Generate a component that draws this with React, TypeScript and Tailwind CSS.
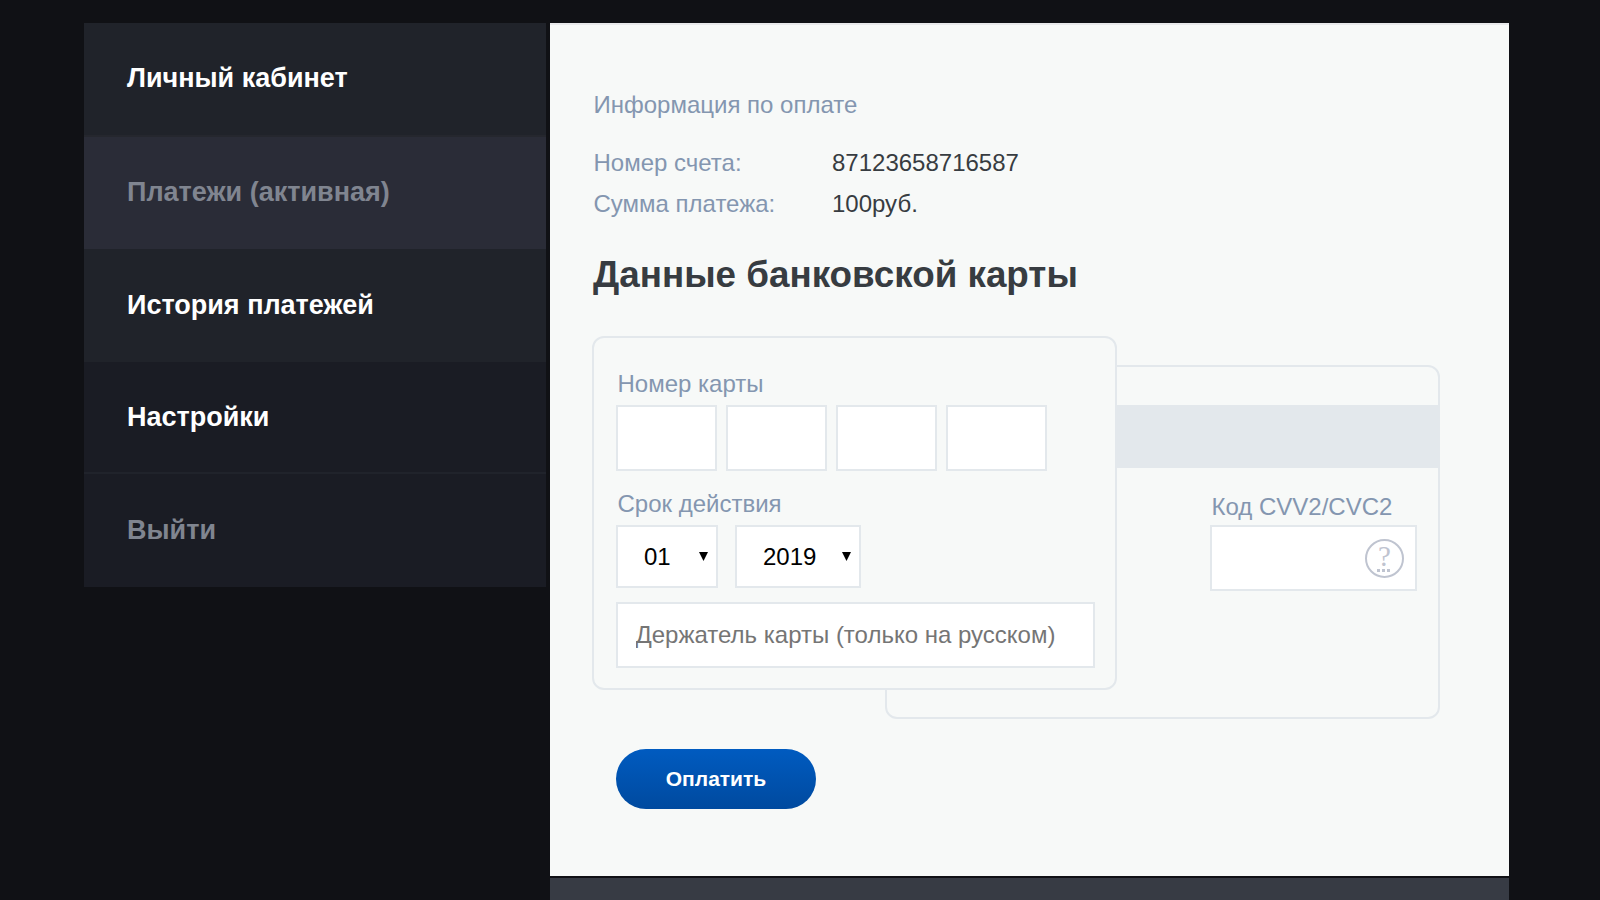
const menu = [
  { label: 'Личный кабинет', style: 'h-[114px] pt-[39px] bg-[#20232a] border-b-2 border-[#25272e] text-white' },
  { label: 'Платежи (активная)', style: 'h-[112px] pt-[39px] bg-[#2a2c37] text-[#808590]' },
  { label: 'История платежей', style: 'h-[113px] pt-[40px] bg-[#20232a] text-white' },
  { label: 'Настройки', style: 'h-[112px] pt-[39px] bg-[#1a1c24] border-b-2 border-[#20232b] text-white' },
  { label: 'Выйти', style: 'h-[113px] pt-[40px] bg-[#1a1c24] text-[#808590]' },
];

function Select({ value, className }: { value: string; className: string }) {
  return (
    <button className={`flex h-[63px] items-center justify-between border-2 border-[#e3e8ec] bg-white pr-2 pl-[26px] text-black ${className}`}>
      <span>{value}</span>
      <svg className="h-[9px] w-[9px]" viewBox="0 0 9 9">
        <path d="M0 0H9L4.5 9Z" fill="#000" />
      </svg>
    </button>
  );
}

function BackCard() {
  return (
    <div className="mt-[29px] ml-[293px] h-[354px] w-[555px] rounded-xl border-2 border-[#e3e8ec] pt-[38px] [grid-area:1/1]">
      <div className="h-[63px] bg-[#e3e8ec]" />
      <div className="mt-[25px] ml-[323px] w-[207px]">
        <label className="block h-8 pl-[1.5px] text-[#8496b0]">Код CVV2/CVC2</label>
        <div className="flex h-[66px] items-center justify-end border-2 border-[#e3e8ec] bg-white pr-[11px]">
          <div className="mt-px flex h-[39px] w-[39px] flex-col items-center rounded-full border-2 border-[#bfc4d0]">
            <span className="mt-[3px] h-[25px] font-['Liberation_Serif',serif] text-[29px] leading-[25px] text-[#bfc4d0]">?</span>
            <span className="mr-[2px] flex gap-[2px]">
              <i className="h-[3px] w-[3px] bg-[#bfc4d0]" />
              <i className="h-[3px] w-[3px] bg-[#bfc4d0]" />
              <i className="h-[3px] w-[3px] bg-[#bfc4d0]" />
            </span>
          </div>
        </div>
      </div>
    </div>
  );
}

function FrontCard() {
  return (
    <div className="z-10 h-[354px] w-[525px] rounded-xl border-2 border-[#e3e8ec] bg-[#f7f9f8] px-[22px] pt-8 [grid-area:1/1]">
      <label className="block h-[35px] pl-[1.5px] text-[#8496b0]">Номер карты</label>
      <div className="flex gap-[9px]">
        {[1, 2, 3, 4].map((n) => (
          <input key={n} className="h-[66px] w-[101px] border-2 border-[#e3e8ec] bg-white px-4" />
        ))}
      </div>
      <label className="mt-[19px] block h-[35px] pl-[1.5px] text-[#8496b0]">Срок действия</label>
      <div className="flex gap-[17px]">
        <Select value="01" className="w-[102px]" />
        <Select value="2019" className="w-[126px]" />
      </div>
      <input
        className="mt-[14px] block h-[66px] w-[479px] border-2 border-[#e3e8ec] bg-white px-[17.5px] placeholder:text-[#757575]"
        placeholder="Держатель карты (только на русском)"
      />
    </div>
  );
}

export default function App() {
  return (
    <div className="flex h-[900px] w-[1600px] items-start gap-1 overflow-hidden bg-[#101115] pt-[23px] pl-[84px] font-['Liberation_Sans',Arial,sans-serif]">
      <nav className="w-[462px]">
        {menu.map((m) => (
          <a key={m.label} className={`block pl-[43px] text-[27px] leading-8 font-bold ${m.style}`}>
            {m.label}
          </a>
        ))}
      </nav>
      <div className="flex w-[959px] flex-col gap-[2px]">
        <main className="h-[853px] border-t-2 border-[#e8e9eb] bg-[#f7f9f8] pt-[66px] pl-[42px] text-[24px] leading-7">
          <p className="pl-[1.5px] text-[#8496b0]">Информация по оплате</p>
          <dl className="mt-[30px] grid grid-cols-[238.5px_1fr] gap-y-[13px] pl-[1.5px]">
            <dt className="text-[#8496b0]">Номер счета:</dt>
            <dd className="text-[#373c41]">87123658716587</dd>
            <dt className="text-[#8496b0]">Сумма платежа:</dt>
            <dd className="text-[#373c41]">100руб.</dd>
          </dl>
          <h1 className="mt-[35px] h-[83px] pl-px text-[36.8px] leading-[44px] font-bold text-[#373c41]">Данные банковской карты</h1>
          <div className="grid h-[383px] justify-start">
            <BackCard />
            <FrontCard />
          </div>
          <button className="mt-[30px] ml-6 block h-[60px] w-[200px] rounded-full bg-linear-to-b from-[#005bc0] to-[#004a9f] text-[21px] font-bold text-white">
            Оплатить
          </button>
        </main>
        <footer className="h-6 bg-[#373b44]" />
      </div>
    </div>
  );
}
